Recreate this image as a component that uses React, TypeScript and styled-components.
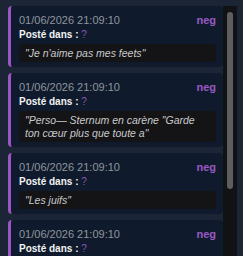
import React from "react";
import styled, { createGlobalStyle } from "styled-components";

const Global = createGlobalStyle`
  html, body { margin: 0; padding: 0; background: #1b2536; }
  body { font-family: "Liberation Sans", Arial, sans-serif; overflow: hidden; }
`;

const Page = styled.div`
  padding: 6px 6px 0 8px;
  display: flex;
  height: 250px;
`;

const List = styled.div`
  flex: 1;
  min-width: 0;
  overflow: hidden;
  display: flex;
  flex-direction: column;
  gap: 6px;
`;

const Track = styled.div`
  flex: none;
  width: 14px;
  background: #111214;
  padding: 6px 4px 0 4px;
  box-sizing: border-box;
`;

const Thumb = styled.div`
  height: 177px;
  border-radius: 3px;
  background: #5e5e60;
`;

const Card = styled.div`
  flex: none;
  background: #0f1b2c;
  border-left: 3px solid #9d55c4;
  border-radius: 4px;
  padding: 7px 7px 5px 8px;
  display: flex;
  flex-direction: column;
`;

const Head = styled.div`
  display: flex;
  justify-content: space-between;
  align-items: center;
  height: 13px;
  margin-bottom: 2px;
`;

const Date = styled.span`
  font-size: 11px;
  color: #8f959e;
`;

const Tag = styled.span`
  font-size: 11px;
  font-weight: bold;
  color: #9b59c4;
`;

const Label = styled.div`
  font-size: 10px;
  line-height: 13px;
  font-weight: bold;
  color: #f2f2f2;
  margin-bottom: 3px;
`;

const Missing = styled.span`
  font-weight: normal;
  color: #8a55b8;
`;

const Quote = styled.div`
  background: #141416;
  border-radius: 3px;
  padding: 3px 6px 2px 6px;
  font-size: 10.5px;
  line-height: 13px;
  font-style: italic;
  color: #c9c9cb;
`;

const items = [
  "Je n'aime pas mes feets",
  "Perso— Sternum en carène \"Garde ton cœur plus que toute a",
  "Les juifs",
  "Je n'aime pas mes feets",
];

export default function App() {
  return (
    <>
      <Global />
      <Page>
        <List>
          {items.map((q, i) => (
            <Card key={i}>
              <Head>
                <Date>01/06/2026 21:09:10</Date>
                <Tag>neg</Tag>
              </Head>
              <Label>
                Posté dans : <Missing>?</Missing>
              </Label>
              <Quote>"{q}"</Quote>
            </Card>
          ))}
        </List>
        <Track>
          <Thumb />
        </Track>
      </Page>
    </>
  );
}
